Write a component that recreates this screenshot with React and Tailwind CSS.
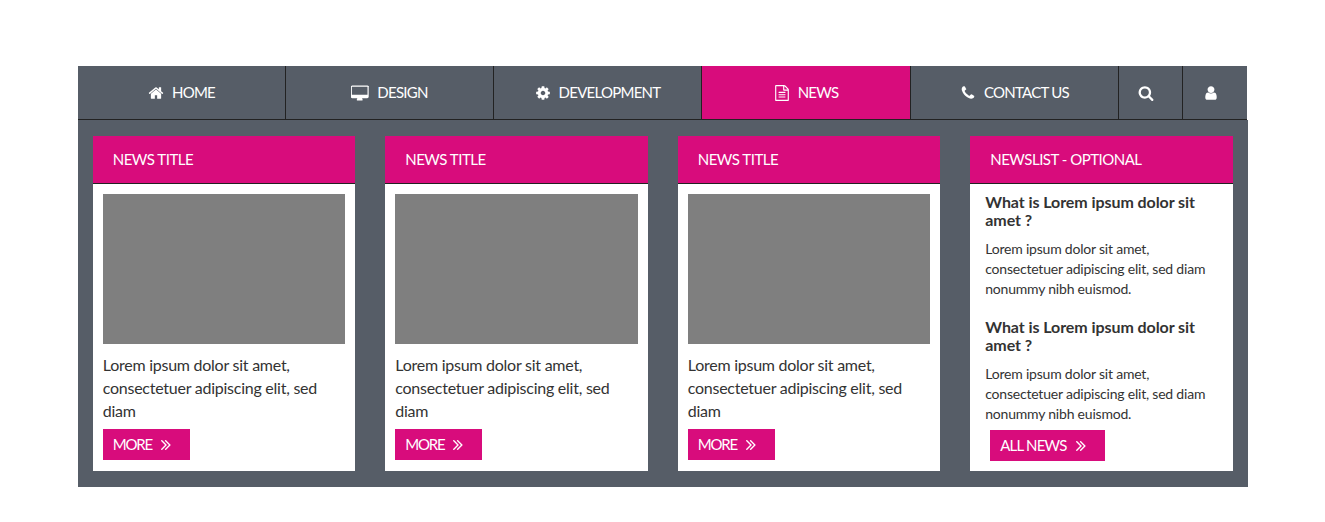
// Font Awesome 4 glyphs, the package icons are a different cut
const icons = {
    home: 'M1472 992v480q0 26-19 45t-45 19h-384v-384h-256v384h-384q-26 0-45-19t-19-45v-480q0-1 .5-3t.5-3l575-474 575 474q1 2 1 6zm223-69l-62 74q-8 9-21 11h-3q-13 0-21-7l-692-577-692 577q-12 8-24 7-13-2-21-11l-62-74q-8-10-7-23.500t11-21.500l719-599q32-26 76-26t76 26l244 204v-195q0-14 9-23t23-9h192q14 0 23 9t9 23v408l219 182q10 8 11 21.500t-7 23.500z',
    cog: 'M1152 896q0-106-75-181t-181-75-181 75-75 181 75 181 181 75 181-75 75-181zm512-109v222q0 12-8 23t-20 13l-185 28q-19 54-39 91 35 50 107 138 10 12 10 25t-9 23q-27 37-99 108t-94 71q-12 0-26-9l-138-108q-44 23-91 38-16 136-29 186-7 28-36 28h-222q-14 0-24.500-8.500t-11.500-21.500l-28-184q-49-16-90-37l-141 107q-10 9-25 9-14 0-25-11-126-114-165-168-7-10-7-23 0-12 8-23 15-21 51-66.500t54-70.500q-27-50-41-99l-183-27q-13-2-21-12.500t-8-23.500v-222q0-12 8-23t19-13l186-28q14-46 39-92-40-57-107-138-10-12-10-24 0-10 9-23 26-36 98.500-107.500t94.500-71.500q13 0 26 10l138 107q44-23 91-38 16-136 29-186 7-28 36-28h222q14 0 24.500 8.500t11.500 21.500l28 184q49 16 90 37l142-107q9-9 24-9 13 0 25 10 129 119 165 170 7 8 7 22 0 12-8 23-15 21-51 66.500t-54 70.500q26 50 41 98l183 28q13 2 21 12.500t8 23.500z',
    file: 'M1596 380q28 28 48 76t20 88v1152q0 40-28 68t-68 28h-1344q-40 0-68-28t-28-68v-1600q0-40 28-68t68-28h896q40 0 88 20t76 48zm-444-244v376h376q-10-29-22-41l-313-313q-12-12-41-22zm384 1528v-1024h-416q-40 0-68-28t-28-68v-416h-768v1536h1280zm-1024-864q0-14 9-23t23-9h704q14 0 23 9t9 23v64q0 14-9 23t-23 9h-704q-14 0-23-9t-9-23v-64zm736 224q14 0 23 9t9 23v64q0 14-9 23t-23 9h-704q-14 0-23-9t-9-23v-64q0-14 9-23t23-9h704zm0 256q14 0 23 9t9 23v64q0 14-9 23t-23 9h-704q-14 0-23-9t-9-23v-64q0-14 9-23t23-9h704z',
    phone: 'M1600 1240q0 27-10 70.500t-21 68.500q-21 50-122 106-94 51-186 51-27 0-53-3.500t-57.500-12.500-47-14.500-55.500-20.500-49-18q-98-35-175-83-127-79-264-216t-216-264q-48-77-83-175-3-9-18-49t-20.500-55.500-14.500-47-12.500-57.500-3.500-53q0-92 51-186 56-101 106-122 25-11 68.500-21t70.500-10q14 0 21 3 18 6 53 76 11 19 30 54t35 63.500 31 53.500q3 4 17.500 25t21.500 35.500 7 28.500q0 20-28.500 50t-62 55-62 53-28.500 46q0 9 5 22.500t8.500 20.500 14 24 11.500 19q76 137 174 235t235 174q2 1 19 11.500t24 14 20.500 8.500 22.500 5q18 0 46-28.500t53-62 55-62 50-28.500q14 0 28.500 7t35.500 21.500 25 17.500q25 15 53.500 31t63.500 35 54 30q70 35 76 53 3 7 3 21z',
    search: 'M1216 832q0-185-131.500-316.500t-316.500-131.500-316.500 131.500-131.500 316.500 131.500 316.500 316.500 131.500 316.500-131.500 131.500-316.500zm512 832q0 52-38 90t-90 38q-54 0-90-38l-343-342q-179 124-399 124-143 0-273.500-55.500t-225-150-150-225-55.500-273.500 55.500-273.500 150-225 225-150 273.500-55.500 273.500 55.500 225 150 150 225 55.500 273.500q0 220-124 399l343 343q37 37 37 90z',
    user: 'M1536 1399q0 109-62.500 187t-150.500 78h-854q-88 0-150.500-78t-62.500-187q0-85 8.500-160.500t31.500-152 58.500-131 94-89 134.500-34.500q131 128 313 128t313-128q76 0 134.500 34.500t94 89 58.500 131 31.500 152 8.500 160.500zm-256-887q0 159-112.500 271.500t-271.500 112.500-271.500-112.500-112.500-271.500 112.500-271.500 271.500-112.500 271.500 112.500 112.500 271.500z',
};

const desktopPath = 'M1728 992v-832q0-13-9.500-22.500t-22.500-9.500h-1600q-13 0-22.500 9.500t-9.500 22.500v832q0 13 9.500 22.500t22.500 9.500h1600q13 0 22.500-9.500t9.500-22.500zm128-832v1088q0 66-47 113t-113 47h-544q0 37 16 77.500t32 71 16 43.500q0 26-19 45t-45 19h-512q-26 0-45-19t-19-45q0-14 16-44t32-70 16-78h-544q-66 0-113-47t-47-113v-1088q0-66 47-113t113-47h1632q66 0 113 47t47 113z';
const chevronPath = 'M979 960q0 13-10 23l-466 466q-10 10-23 10t-23-10l-50-50q-10-10-10-23t10-23l393-393-393-393q-10-10-10-23t10-23l50-50q10-10 23-10t23 10l466 466q10 10 10 23zm384 0q0 13-10 23l-466 466q-10 10-23 10t-23-10l-50-50q-10-10-10-23t10-23l393-393-393-393q-10-10-10-23t10-23l50-50q10-10 23-10t23 10l466 466q10 10 10 23z';

const Icon = ({ name }) => {
    if (name === 'desktop') {
        return (
            <svg viewBox="-32 -64 1920 1792" className="h-4 w-[18px] fill-current" preserveAspectRatio="none"><path d={desktopPath} /></svg>
        );
    }
    return (
        <svg viewBox="0 0 1792 1792" className="h-4 w-4 fill-current"><path d={icons[name]} /></svg>
    );
};

const navItems = [
    { label: 'HOME', icon: 'home', width: 'w-[208px]' },
    { label: 'DESIGN', icon: 'desktop', width: 'w-[208px]' },
    { label: 'DEVELOPMENT', icon: 'cog', width: 'w-[208px]' },
    { label: 'NEWS', icon: 'file', width: 'w-[209px]', active: true },
    { label: 'CONTACT US', icon: 'phone', width: 'w-[208px]' },
    { icon: 'search', width: 'w-[64px] pr-[10px]' },
    { icon: 'user', width: 'w-[64px] pr-[9px]', last: true },
];

const Button = ({ children, className = '', textClass = 'tracking-[-0.8px]' }) => (
    <a className={`flex h-[31px] items-center bg-[#d80c7c] pl-[10px] text-[15px] text-white ${className}`}>
        <span className={`pb-[1px] ${textClass}`}>{children}</span>
        <svg viewBox="0 64 1792 1792" className="ml-[5px] h-[18px] w-[18px] fill-current"><path d={chevronPath} /></svg>
    </a>
);

const CardHeader = ({ children }) => (
    <div className="flex h-[48px] items-center border-b border-[#222] bg-[#d80c7c] pl-5 text-[15px] tracking-[-0.5px] text-white">{children}</div>
);

const NewsCard = () => (
    <div className="flex flex-col bg-white">
        <CardHeader>NEWS TITLE</CardHeader>
        <div className="flex flex-1 flex-col px-[10px] pt-[10px]">
            <div className="h-[150px] bg-[#7f7f7f]" />
            <p className="mt-[9px] text-[16px] leading-[23px] tracking-[-0.25px] text-[#333]">
                Lorem ipsum dolor sit amet, consectetuer adipiscing elit, sed diam
            </p>
            <Button className="mt-[7px] w-[87px]" textClass="tracking-[-1.2px]">MORE</Button>
        </div>
    </div>
);

const NewsItem = ({ className = '' }) => (
    <div className={className}>
        <h4 className="text-[16px] font-bold leading-[18px] tracking-[-0.07px] text-[#333]">What is Lorem ipsum dolor sit amet ?</h4>
        <p className="mt-[10px] text-[14px] leading-[20px] tracking-[-0.21px] text-[#333]">
            Lorem ipsum dolor sit amet, consectetuer adipiscing elit, sed diam nonummy nibh euismod.
        </p>
    </div>
);

export default function App() {
    return (
        <div className="min-h-[522px] bg-white pl-[78px] pt-[66px] font-['Lato',sans-serif]">
            <div className="w-[1170px]">
                <nav className="flex h-[54px] w-[1169px] border-b border-[#222] bg-[#565d67] text-[15px] tracking-[-0.75px] text-white">
                    {navItems.map((item, i) => (
                        <a
                            key={i}
                            className={`flex shrink-0 items-center justify-center gap-2 ${item.width} ${item.last ? '' : 'border-r border-[#222]'} ${item.active ? 'bg-[#d80c7c]' : ''}`}
                        >
                            <Icon name={item.icon} />
                            {item.label && <span className="pb-[1px]">{item.label}</span>}
                        </a>
                    ))}
                </nav>
                <div className="grid h-[367px] grid-cols-4 gap-[30px] bg-[#565d67] pl-[14.75px] pr-[15.25px] py-4">
                    <NewsCard />
                    <NewsCard />
                    <NewsCard />
                    <div className="flex flex-col bg-white">
                        <CardHeader>NEWSLIST - OPTIONAL</CardHeader>
                        <div className="px-[15px] pt-[9px]">
                            <NewsItem />
                            <NewsItem className="mt-[19px]" />
                            <Button className="ml-[5px] mt-[6px] w-[115px]">ALL NEWS</Button>
                        </div>
                    </div>
                </div>
            </div>
        </div>
    );
}
